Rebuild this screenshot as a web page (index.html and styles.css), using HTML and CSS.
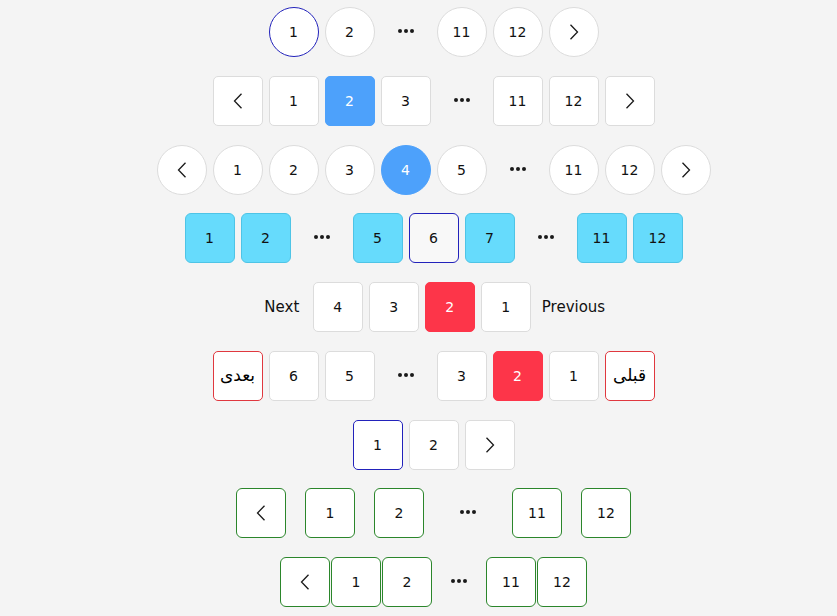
FILE: index.html
```html
<!DOCTYPE html>
<html lang="en">
<head>
<meta charset="utf-8">
<title>Pagination</title>
<link rel="stylesheet" href="styles.css">
</head>
<body>
<div class="page">
  <ul class="pager gap6 circle">
    <li class="item active-outline">1</li>
    <li class="item">2</li>
    <li class="dots"><i></i><i></i><i></i></li>
    <li class="item">11</li>
    <li class="item">12</li>
    <li class="item"><svg class="chev" viewBox="0 0 10 16"><polyline points="1.5,0.7 8.5,8 1.5,15.3"/></svg></li>
  </ul>

  <ul class="pager gap6 square">
    <li class="item"><svg class="chev" viewBox="0 0 10 16"><polyline points="8.5,0.7 1.5,8 8.5,15.3"/></svg></li>
    <li class="item">1</li>
    <li class="item active-blue">2</li>
    <li class="item">3</li>
    <li class="dots"><i></i><i></i><i></i></li>
    <li class="item">11</li>
    <li class="item">12</li>
    <li class="item"><svg class="chev" viewBox="0 0 10 16"><polyline points="1.5,0.7 8.5,8 1.5,15.3"/></svg></li>
  </ul>

  <ul class="pager gap6 circle">
    <li class="item"><svg class="chev" viewBox="0 0 10 16"><polyline points="8.5,0.7 1.5,8 8.5,15.3"/></svg></li>
    <li class="item">1</li>
    <li class="item">2</li>
    <li class="item">3</li>
    <li class="item active-blue">4</li>
    <li class="item">5</li>
    <li class="dots"><i></i><i></i><i></i></li>
    <li class="item">11</li>
    <li class="item">12</li>
    <li class="item"><svg class="chev" viewBox="0 0 10 16"><polyline points="1.5,0.7 8.5,8 1.5,15.3"/></svg></li>
  </ul>

  <ul class="pager gap6 square cyan">
    <li class="item">1</li>
    <li class="item">2</li>
    <li class="dots"><i></i><i></i><i></i></li>
    <li class="item">5</li>
    <li class="item current">6</li>
    <li class="item">7</li>
    <li class="dots"><i></i><i></i><i></i></li>
    <li class="item">11</li>
    <li class="item">12</li>
  </ul>

  <ul class="pager gap6 square reverse">
    <li class="label">Previous</li>
    <li class="item">1</li>
    <li class="item active-red">2</li>
    <li class="item">3</li>
    <li class="item">4</li>
    <li class="label">Next</li>
  </ul>

  <ul class="pager gap6 square rtl" dir="rtl">
    <li class="item red-outline" lang="fa">قبلی</li>
    <li class="item">1</li>
    <li class="item active-red">2</li>
    <li class="item">3</li>
    <li class="dots"><i></i><i></i><i></i></li>
    <li class="item">5</li>
    <li class="item">6</li>
    <li class="item red-outline" lang="fa">بعدی</li>
  </ul>

  <ul class="pager gap6 square">
    <li class="item active-outline">1</li>
    <li class="item">2</li>
    <li class="item"><svg class="chev" viewBox="0 0 10 16"><polyline points="1.5,0.7 8.5,8 1.5,15.3"/></svg></li>
  </ul>

  <ul class="pager gap19 square green">
    <li class="item"><svg class="chev" viewBox="0 0 10 16"><polyline points="8.5,0.7 1.5,8 8.5,15.3"/></svg></li>
    <li class="item">1</li>
    <li class="item">2</li>
    <li class="dots"><i></i><i></i><i></i></li>
    <li class="item">11</li>
    <li class="item">12</li>
  </ul>

  <ul class="pager gap1 square green">
    <li class="item"><svg class="chev" viewBox="0 0 10 16"><polyline points="8.5,0.7 1.5,8 8.5,15.3"/></svg></li>
    <li class="item">1</li>
    <li class="item">2</li>
    <li class="dots wide"><i></i><i></i><i></i></li>
    <li class="item">11</li>
    <li class="item">12</li>
  </ul>
</div>
</body>
</html>
```
FILE: styles.css
```css
* { box-sizing: border-box; }

html, body {
  margin: 0;
  padding: 0;
  background: #f4f4f4;
}

body {
  font-family: "DejaVu Sans", "Noto Sans", sans-serif;
  font-size: 14px;
  color: #111;
}

.page {
  display: flex;
  flex-direction: column;
  gap: 18.75px;
  padding: 7px 0 0 30px;
}

.pager {
  list-style: none;
  margin: 0;
  padding: 0;
  display: flex;
  justify-content: center;
  align-items: center;
  height: 50px;
}

.gap6 { gap: 6px; }
.gap19 { gap: 19px; }
.gap1 { gap: 1px; }
.reverse { flex-direction: row-reverse; }

.item {
  width: 50px;
  height: 50px;
  display: flex;
  align-items: center;
  justify-content: center;
  background: #fff;
  border: 1px solid #dcdcdc;
  line-height: 1;
}

.circle .item { border-radius: 50%; }
.square .item { border-radius: 5px; }

.chev {
  width: 10px;
  height: 16px;
  fill: none;
  stroke: #1a1a1a;
  stroke-width: 1.3;
}

.dots {
  width: 50px;
  height: 50px;
  display: flex;
  align-items: center;
  justify-content: center;
  gap: 2px;
  padding-bottom: 2px;
}
.dots.wide { width: 52px; }
.dots i {
  width: 4px;
  height: 4px;
  border-radius: 50%;
  background: #1a1a1a;
}

.active-outline { border-color: #2222bb !important; }

.active-blue {
  background: #4da1fb !important;
  border-color: #4da1fb !important;
  color: #fff;
}

.active-red {
  background: #fd3549 !important;
  border-color: #fd3549 !important;
  color: #fff;
}

.red-outline {
  border-color: #e0383f !important;
  font-size: 17px;
  color: #000;
}

.cyan .item {
  background: #66dbfc;
  border-color: #4ec4e6;
  border-radius: 6px;
}
.cyan .item.current {
  background: #f8f8f8;
  border-color: #2222bb;
}

.green .item {
  border-color: #2b862b;
  border-radius: 6px;
}

.label {
  min-width: 50px;
  height: 50px;
  padding: 0 5px;
  display: flex;
  align-items: center;
  justify-content: center;
  font-size: 15px;
}
```
